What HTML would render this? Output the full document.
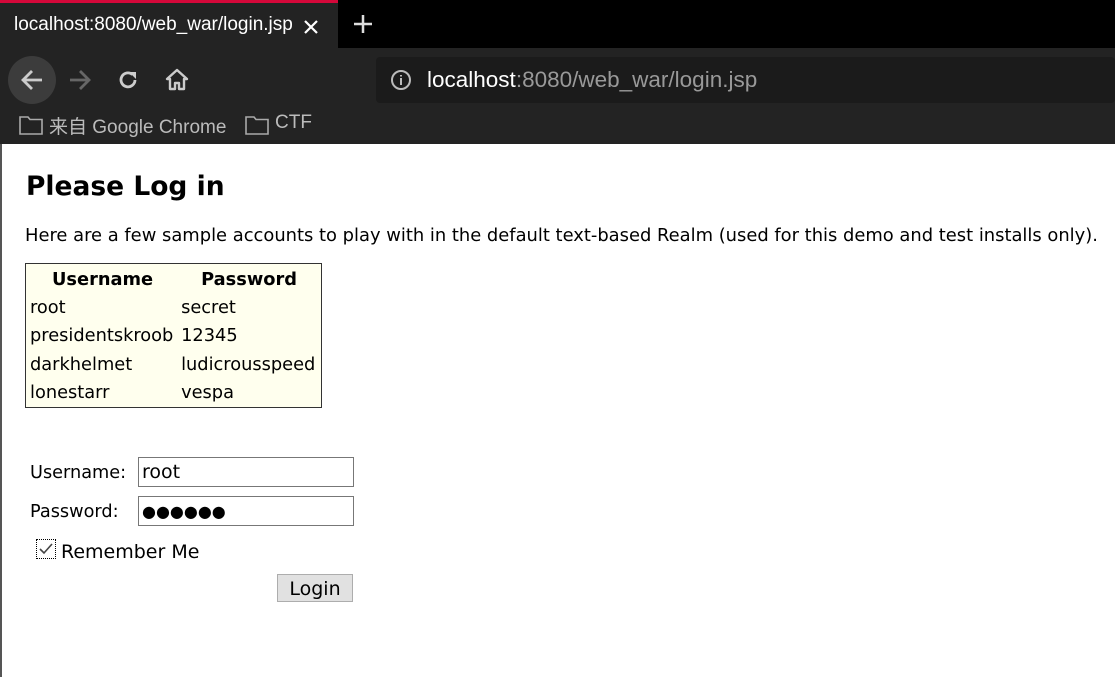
<!DOCTYPE html>
<html><head><meta charset="utf-8"><style>
*{margin:0;padding:0;box-sizing:border-box}
body{width:1115px;height:677px;overflow:hidden;background:#fff;font-family:"DejaVu Sans","Liberation Sans",sans-serif;position:relative}
.top{position:absolute;left:0;top:0;width:1115px;height:48px;background:#000}
.tab{position:absolute;left:0;top:0;width:338px;height:48px;background:#232323;border-top:3px solid #d4083a}
.tab span{position:absolute;left:14px;top:11px;color:#fff;font:19px "Liberation Sans","DejaVu Sans",sans-serif;white-space:nowrap;width:282px;overflow:hidden}
.tb{position:absolute;left:0;top:48px;width:1115px;height:96px;background:#232323}
.omni{position:absolute;left:376px;top:57px;width:739px;height:46px;background:#1b1b1b;border-radius:4px}
.omni span{position:absolute;left:51px;top:10px;font:22.5px "Liberation Sans",sans-serif;color:#fff}
.bm{position:absolute;top:112px;color:#bbb;font:19px "Liberation Sans","Noto Sans CJK SC",sans-serif}
.edge{position:absolute;left:0;top:144px;width:2px;height:533px;background:#555}
.content{position:absolute;left:0;top:144px;width:1115px;height:533px}
h1{position:absolute;left:26px;top:27px;font-size:26.5px;font-weight:bold}
p{position:absolute;left:25px;top:81px;font-size:17.9px;white-space:nowrap}
table{position:absolute;left:25px;top:119px;width:297px;height:145px;background:#ffffee;border:1px solid #333;border-collapse:separate;border-spacing:2px;font-size:17.8px}
th{text-align:center}td,th{padding:1px 2px 0;height:26px;white-space:nowrap}
.lab{position:absolute;left:30px;font-size:17.7px}
.inp{position:absolute;left:138px;width:216px;height:30px;border:1px solid #777;font-size:19px;padding:3px 3px}
.btn{position:absolute;left:277px;top:430px;width:76px;height:28px;background:#e1e1e1;border:1px solid #adadad;font-size:19px;text-align:center;line-height:28px}
</style></head><body>
<div class="top"><div class="tab"><span>localhost:8080/web_war/login.jsp</span>
<svg style="position:absolute;left:303px;top:16px" width="16" height="16"><path d="M2 2L14 14M14 2L2 14" stroke="#fff" stroke-width="2.2"/></svg></div>
<svg style="position:absolute;left:352px;top:13px" width="22" height="22"><path d="M11 2V20M2 11H20" stroke="#ddd" stroke-width="2.5"/></svg></div>
<div class="tb"></div>
<div style="position:absolute;left:8px;top:56px;width:48px;height:48px;border-radius:50%;background:#3c3c3c"></div>
<svg style="position:absolute;left:18px;top:66px" width="28" height="28"><path d="M24 14H5M14 5L5 14L14 23" stroke="#ccc" stroke-width="2.8" fill="none"/></svg>
<svg style="position:absolute;left:67px;top:66px" width="28" height="28"><path d="M3 14H22M13 5L22 14L13 23" stroke="#666" stroke-width="2.8" fill="none"/></svg>
<svg style="position:absolute;left:116px;top:68px" width="24" height="24"><path d="M19 12A7 7 0 1 1 16.5 6.5" stroke="#ccc" stroke-width="2.8" fill="none"/><path d="M13 4H20V11Z" fill="#ccc"/></svg>
<svg style="position:absolute;left:164px;top:67px" width="26" height="26"><path d="M13 3L3 12H6V22H11V16H15V22H20V12H23Z" stroke="#ccc" stroke-width="2.4" fill="none" stroke-linejoin="round"/></svg>
<div class="omni"><svg style="position:absolute;left:14px;top:12px" width="22" height="22"><circle cx="11" cy="11" r="9" stroke="#bbb" stroke-width="2" fill="none"/><path d="M11 9V16M11 6V7.5" stroke="#bbb" stroke-width="2"/></svg><span>localhost<span style="position:static;color:#999;font:inherit">:8080/web_war/login.jsp</span></span></div>
<svg style="position:absolute;left:19px;top:115px" width="24" height="20"><path d="M1 2H9L11 4.5H23V19H1Z" stroke="#aaa" stroke-width="1.6" fill="none"/></svg>
<div class="bm" style="left:49px">来自 Google Chrome</div>
<svg style="position:absolute;left:245px;top:115px" width="24" height="20"><path d="M1 2H9L11 4.5H23V19H1Z" stroke="#aaa" stroke-width="1.6" fill="none"/></svg>
<div class="bm" style="left:275px">CTF</div>
<div class="edge"></div>
<div class="content">
<h1>Please Log in</h1>
<p>Here are a few sample accounts to play with in the default text-based Realm (used for this demo and test installs only).</p>
<table><tr><th>Username</th><th>Password</th></tr>
<tr><td>root</td><td>secret</td></tr>
<tr><td>presidentskroob</td><td>12345</td></tr>
<tr><td>darkhelmet</td><td>ludicrousspeed</td></tr>
<tr><td>lonestarr</td><td>vespa</td></tr></table>
<div class="lab" style="top:319px">Username:</div>
<div class="inp" style="top:313px;line-height:22px">root</div>
<div class="lab" style="top:358px">Password:</div>
<div class="inp" style="top:352px;line-height:22px;font-size:16px;padding-top:4px">●●●●●●</div>
<div style="position:absolute;left:36px;top:395px;width:20px;height:20px;border:1px dotted #000"></div>
<svg style="position:absolute;left:38px;top:397px" width="16" height="16"><path d="M2 8L6 12L14 3" stroke="#444" stroke-width="1.6" fill="none"/></svg>
<div style="position:absolute;left:61px;top:397px;font-size:19px">Remember Me</div>
<div class="btn">Login</div>
</div>
</body></html>
